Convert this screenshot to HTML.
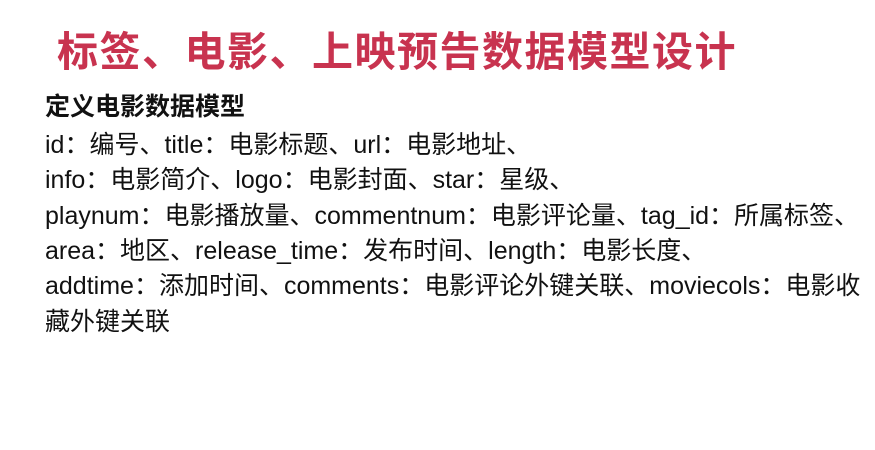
<!DOCTYPE html>
<html><head><meta charset="utf-8"><style>
body{margin:0;width:875px;height:450px;background:#fff;overflow:hidden;position:relative;font-family:"Liberation Sans","Noto Sans CJK SC",sans-serif;}
.t{position:absolute;left:57px;top:18px;font-size:41px;font-weight:bold;color:#c8334f;white-space:nowrap;letter-spacing:1.5px}
.s{position:absolute;left:45px;top:87px;font-size:25px;font-weight:bold;color:#111;white-space:nowrap}
.l{position:absolute;left:45px;font-size:25px;color:#111;white-space:nowrap;line-height:30px}
</style></head><body>
<div class="t">标签、电影、上映预告数据模型设计</div>
<div class="s">定义电影数据模型</div>
<div class="l" style="top:130px">id：编号、title：电影标题、url：电影地址、</div>
<div class="l" style="top:165px">info：电影简介、logo：电影封面、star：星级、</div>
<div class="l" style="top:201px">playnum：电影播放量、commentnum：电影评论量、tag_id：所属标签、</div>
<div class="l" style="top:236px">area：地区、release_time：发布时间、length：电影长度、</div>
<div class="l" style="top:271px">addtime：添加时间、comments：电影评论外键关联、moviecols：电影收</div>
<div class="l" style="top:307px">藏外键关联</div>
</body></html>
